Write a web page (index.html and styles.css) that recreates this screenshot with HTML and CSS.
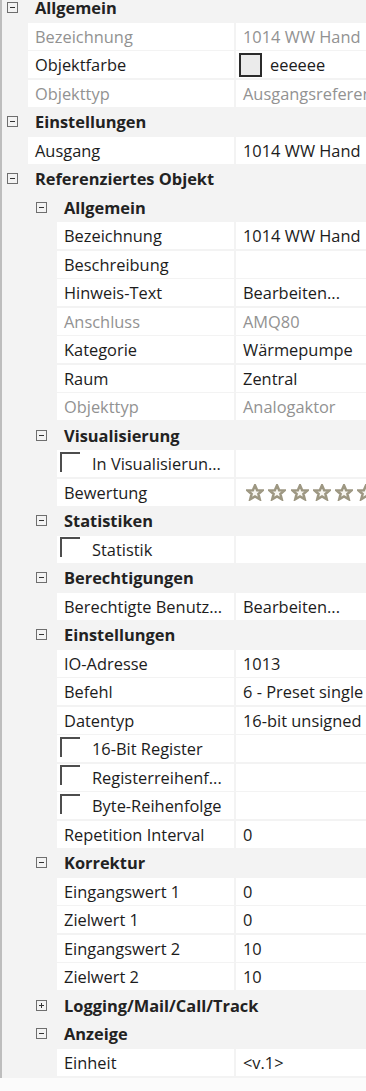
FILE: index.html
```html
<!DOCTYPE html>
<html lang="de">
<head>
<meta charset="utf-8">
<title>Eigenschaften</title>
<link rel="stylesheet" href="styles.css">
</head>
<body>
<div class="grid">
  <div class="grp l0"><span class="tog minus"></span><span class="gt">Allgemein</span></div>
  <div class="prop l1"><div class="n dis">Bezeichnung</div><div class="v dis">1014 WW Hand</div></div>
  <div class="prop l1"><div class="n">Objektfarbe</div><div class="v"><span class="swatch"></span><span class="sw-t">eeeeee</span></div></div>
  <div class="prop l1"><div class="n dis">Objekttyp</div><div class="v dis">Ausgangsreferenz</div></div>

  <div class="grp l0"><span class="tog minus"></span><span class="gt">Einstellungen</span></div>
  <div class="prop l1"><div class="n">Ausgang</div><div class="v">1014 WW Hand</div></div>

  <div class="grp l0"><span class="tog minus"></span><span class="gt">Referenziertes Objekt</span></div>
  <div class="grp l1"><span class="tog minus"></span><span class="gt">Allgemein</span></div>
  <div class="prop l2"><div class="n">Bezeichnung</div><div class="v">1014 WW Hand</div></div>
  <div class="prop l2"><div class="n">Beschreibung</div><div class="v"></div></div>
  <div class="prop l2"><div class="n">Hinweis-Text</div><div class="v">Bearbeiten...</div></div>
  <div class="prop l2"><div class="n dis">Anschluss</div><div class="v dis">AMQ80</div></div>
  <div class="prop l2"><div class="n">Kategorie</div><div class="v">Wärmepumpe</div></div>
  <div class="prop l2"><div class="n">Raum</div><div class="v">Zentral</div></div>
  <div class="prop l2"><div class="n dis">Objekttyp</div><div class="v dis">Analogaktor</div></div>

  <div class="grp l1"><span class="tog minus"></span><span class="gt">Visualisierung</span></div>
  <div class="prop l2"><div class="n cbn"><span class="cb"></span>In Visualisierun...</div><div class="v"></div></div>
  <div class="prop l2"><div class="n">Bewertung</div><div class="v stars">
    <svg class="star" viewBox="0 0 20 19"><polygon points="10,1.5 12.4,7 18.3,7.3 13.8,11.1 15.3,17 10,13.8 4.7,17 6.2,11.1 1.7,7.3 7.6,7"/></svg>
    <svg class="star" viewBox="0 0 20 19"><polygon points="10,1.5 12.4,7 18.3,7.3 13.8,11.1 15.3,17 10,13.8 4.7,17 6.2,11.1 1.7,7.3 7.6,7"/></svg>
    <svg class="star" viewBox="0 0 20 19"><polygon points="10,1.5 12.4,7 18.3,7.3 13.8,11.1 15.3,17 10,13.8 4.7,17 6.2,11.1 1.7,7.3 7.6,7"/></svg>
    <svg class="star" viewBox="0 0 20 19"><polygon points="10,1.5 12.4,7 18.3,7.3 13.8,11.1 15.3,17 10,13.8 4.7,17 6.2,11.1 1.7,7.3 7.6,7"/></svg>
    <svg class="star" viewBox="0 0 20 19"><polygon points="10,1.5 12.4,7 18.3,7.3 13.8,11.1 15.3,17 10,13.8 4.7,17 6.2,11.1 1.7,7.3 7.6,7"/></svg>
    <svg class="star" viewBox="0 0 20 19"><polygon points="10,1.5 12.4,7 18.3,7.3 13.8,11.1 15.3,17 10,13.8 4.7,17 6.2,11.1 1.7,7.3 7.6,7"/></svg>
  </div></div>

  <div class="grp l1"><span class="tog minus"></span><span class="gt">Statistiken</span></div>
  <div class="prop l2"><div class="n cbn"><span class="cb"></span>Statistik</div><div class="v"></div></div>

  <div class="grp l1"><span class="tog minus"></span><span class="gt">Berechtigungen</span></div>
  <div class="prop l2"><div class="n">Berechtigte Benutz...</div><div class="v">Bearbeiten...</div></div>

  <div class="grp l1"><span class="tog minus"></span><span class="gt">Einstellungen</span></div>
  <div class="prop l2"><div class="n">IO-Adresse</div><div class="v">1013</div></div>
  <div class="prop l2"><div class="n">Befehl</div><div class="v">6 - Preset single register</div></div>
  <div class="prop l2"><div class="n">Datentyp</div><div class="v">16-bit unsigned</div></div>
  <div class="prop l2"><div class="n cbn"><span class="cb"></span>16-Bit Register</div><div class="v"></div></div>
  <div class="prop l2"><div class="n cbn"><span class="cb"></span>Registerreihenf...</div><div class="v"></div></div>
  <div class="prop l2"><div class="n cbn"><span class="cb"></span>Byte-Reihenfolge</div><div class="v"></div></div>
  <div class="prop l2"><div class="n">Repetition Interval</div><div class="v">0</div></div>

  <div class="grp l1"><span class="tog minus"></span><span class="gt">Korrektur</span></div>
  <div class="prop l2"><div class="n">Eingangswert 1</div><div class="v">0</div></div>
  <div class="prop l2"><div class="n">Zielwert 1</div><div class="v">0</div></div>
  <div class="prop l2"><div class="n">Eingangswert 2</div><div class="v">10</div></div>
  <div class="prop l2"><div class="n">Zielwert 2</div><div class="v">10</div></div>

  <div class="grp l1"><span class="tog plus"></span><span class="gt">Logging/Mail/Call/Track</span></div>
  <div class="grp l1"><span class="tog minus"></span><span class="gt">Anzeige</span></div>
  <div class="prop l2"><div class="n">Einheit</div><div class="v">&lt;v.1&gt;</div></div>
</div>
</body>
</html>
```
FILE: styles.css
```css
html, body {
  margin: 0;
  padding: 0;
  background: #fbfbfb;
}
body {
  width: 366px;
  height: 1091px;
  overflow: hidden;
  font-family: "Open Sans", "Liberation Sans", sans-serif;
  font-size: 16.4px;
  color: #1c1c1c;
}
.grid {
  margin-top: -5.8px;
  border-left: 2px solid #bdbdbd;
  background: #f3f3f3;
  padding-bottom: 0.3px;
}
.grp, .prop {
  height: 27px;
  margin-bottom: 1.5px;
  white-space: nowrap;
  overflow: hidden;
}
.grp {
  display: flex;
  align-items: center;
  font-weight: 700;
  color: #222;
}
.grp.l0 { padding-left: 5px; }
.grp.l1 { padding-left: 34px; }
.tog {
  flex: none;
  box-sizing: border-box;
  width: 11px;
  height: 11px;
  border: 1px solid #6e6e6e;
  margin-right: 17px;
  position: relative;
}
.tog::before {
  content: "";
  position: absolute;
  left: 2px;
  top: 4px;
  width: 5px;
  height: 1px;
  background: #333;
}
.tog.plus::after {
  content: "";
  position: absolute;
  left: 4px;
  top: 2px;
  width: 1px;
  height: 5px;
  background: #333;
}
.prop {
  display: grid;
  column-gap: 1.5px;
}
.prop.l1 { margin-left: 26px; grid-template-columns: 206px 1fr; }
.prop.l2 { margin-left: 55px; grid-template-columns: 177px 1fr; }
.n, .v {
  background: #fff;
  display: flex;
  align-items: center;
  overflow: hidden;
}
.n { padding-left: 7px; }
.v { padding-left: 7.5px; }
.dis { color: #929292; }
.swatch {
  flex: none;
  box-sizing: border-box;
  width: 23px;
  height: 24px;
  border: 2px solid #2b2b2b;
  background: #ebebeb;
  margin-left: -4px;
  margin-right: 8px;
}
.cbn { padding-left: 3px; }
.cb {
  flex: none;
  box-sizing: border-box;
  width: 20px;
  height: 20px;
  border-top: 2px solid #4d4d4d;
  border-left: 2px solid #4d4d4d;
  align-self: flex-start;
  margin-top: 1.5px;
  margin-right: 12px;
}
.stars {
  gap: 4.3px;
  padding-left: 10.5px;
}
.star {
  flex: none;
  width: 18px;
  height: 17px;
}
.star polygon {
  fill: #f7f6f1;
  stroke: #9d9782;
  stroke-width: 2.8;
  stroke-linejoin: miter;
}
```
